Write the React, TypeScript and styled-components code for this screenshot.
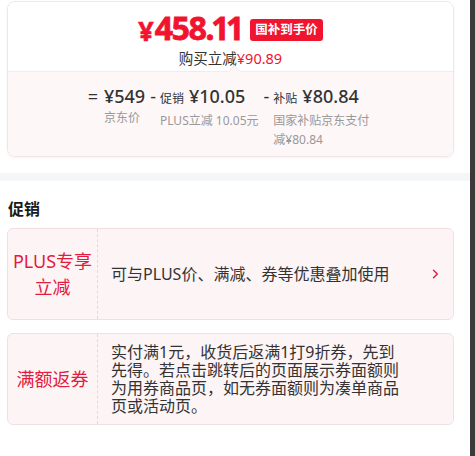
import React from "react";
import styled, { createGlobalStyle } from "styled-components";

const Global = createGlobalStyle`
  html, body { margin: 0; padding: 0; background: #fff; }
  body {
    font-family: "Noto Sans", "Noto Sans CJK SC", sans-serif;
    color: #333;
    -webkit-font-smoothing: antialiased;
  }
  * { box-sizing: border-box; }
`;

const RED = "#f0142f";
const LABEL_RED = "#e31b3d";

const Page = styled.div`
  display: flex;
  width: 475px;
  height: 456px;
  overflow: hidden;
`;

const Main = styled.div`
  flex: 1;
  display: flex;
  flex-direction: column;
`;

const Rail = styled.div`
  width: 5px;
  background: #3a3a3a;
`;

const Padded = styled.div<{ $top?: number }>`
  padding: ${(p) => p.$top ?? 0}px 16px 0 7px;
`;

const PriceCard = styled.div`
  border: 1px solid #f4e4e7;
  border-radius: 8px;
  overflow: hidden;
  box-shadow: 0 1px 3px rgba(0, 0, 0, 0.05);
`;

const PriceTop = styled.div`
  background: #fff;
  height: 70px;
  display: flex;
  flex-direction: column;
  align-items: center;
  padding-top: 9px;
  position: relative;
  border-bottom: 1px solid #f6eaec;
  &::after {
    content: "";
    position: absolute;
    left: 50%;
    bottom: -1px;
    width: 8px;
    height: 8px;
    margin-left: -1px;
    background: #fdf7f8;
    border-left: 1px solid #f6eaec;
    border-top: 1px solid #f6eaec;
    transform: translateY(4px) rotate(45deg);
  }
`;

const PriceLine = styled.div`
  display: flex;
  align-items: flex-end;
  height: 33px;
`;

const Yen = styled.span`
  font-family: "Noto Sans", sans-serif;
  font-weight: 700;
  font-size: 27px;
  line-height: 27px;
  color: ${RED};
  -webkit-text-stroke: 0.6px ${RED};
  margin-right: 1px;
`;

const BigNum = styled.span`
  font-family: "Noto Sans", sans-serif;
  font-weight: 700;
  font-size: 32px;
  line-height: 32px;
  letter-spacing: -1.8px;
  font-feature-settings: "pnum";
  color: ${RED};
  -webkit-text-stroke: 0.8px ${RED};
`;

const Badge = styled.span`
  margin-left: 8px;
  margin-bottom: 3px;
  background: ${RED};
  color: #fff;
  font-size: 12.5px;
  font-weight: 700;
  line-height: 22px;
  padding: 0 5px;
  border-radius: 3px;
`;

const SaveLine = styled.div`
  margin-top: 5px;
  font-size: 14.5px;
  line-height: 18px;
  color: #333;
`;

const SaveAmt = styled.span`
  color: ${RED};
`;

const PriceBottom = styled.div`
  background: #fdf7f8;
  height: 84px;
  display: flex;
  justify-content: center;
  align-items: flex-start;
  gap: 5px;
  padding-top: 12px;
`;

const Part = styled.div`
  display: flex;
  align-items: flex-start;
`;

const Sign = styled.span<{ $gap: number }>`
  font-size: 18px;
  line-height: 24px;
  color: #333;
  margin-right: ${(p) => p.$gap}px;
`;

const PartBody = styled.div`
  display: flex;
  flex-direction: column;
`;

const Value = styled.div`
  font-size: 18px;
  line-height: 24px;
  font-weight: 500;
  color: #333;
  white-space: nowrap;
`;

const ValueTag = styled.span`
  font-size: 12px;
  font-weight: 400;
  margin-right: 5px;
`;

const Caption = styled.div<{ $max?: number }>`
  font-size: 12px;
  line-height: 19px;
  color: #999;
  max-width: ${(p) => (p.$max ? `${p.$max}px` : "none")};
`;

const Band = styled.div`
  margin-top: 16px;
  height: 8px;
  background: #f5f6f8;
`;

const Heading = styled.div`
  padding: 16px 0 0 8px;
  font-size: 16px;
  font-weight: 700;
  line-height: 24px;
  color: #1a1a1a;
`;

const PromoList = styled.div`
  display: flex;
  flex-direction: column;
  gap: 13px;
`;

const Promo = styled.div`
  display: flex;
  min-height: 92px;
  border: 1px solid #f3dfe3;
  border-radius: 6px;
  background: #fdf4f6;
`;

const PromoLabel = styled.div`
  width: 90px;
  flex-shrink: 0;
  display: flex;
  align-items: center;
  justify-content: center;
  text-align: center;
  border-right: 1px dashed #efd3d9;
  color: ${LABEL_RED};
  font-size: 18px;
  line-height: 26px;
  padding: 0 2px;
`;

const PromoBody = styled.div`
  flex: 1;
  display: flex;
  align-items: center;
  padding: 8px 14px 8px 13px;
`;

const PromoText = styled.div`
  flex: 1;
  max-width: 296px;
  font-size: 16px;
  line-height: 18px;
  color: #333;
`;

const Chevron = styled.svg`
  margin-left: auto;
  flex-shrink: 0;
`;

export default function App() {
  return (
    <>
      <Global />
      <Page>
        <Main>
          <Padded $top={1}>
            <PriceCard>
              <PriceTop>
                <PriceLine>
                  <Yen>¥</Yen>
                  <BigNum>458.11</BigNum>
                  <Badge>国补到手价</Badge>
                </PriceLine>
                <SaveLine>
                  购买立减<SaveAmt>¥90.89</SaveAmt>
                </SaveLine>
              </PriceTop>
              <PriceBottom>
                <Part>
                  <Sign $gap={6}>=</Sign>
                  <PartBody>
                    <Value>¥549</Value>
                    <Caption>京东价</Caption>
                  </PartBody>
                </Part>
                <Part>
                  <Sign $gap={4}>-</Sign>
                  <PartBody>
                    <Value>
                      <ValueTag>促销</ValueTag>¥10.05
                    </Value>
                    <Caption>PLUS立减 10.05元</Caption>
                  </PartBody>
                </Part>
                <Part>
                  <Sign $gap={4}>-</Sign>
                  <PartBody>
                    <Value>
                      <ValueTag>补贴</ValueTag>¥80.84
                    </Value>
                    <Caption $max={100}>国家补贴京东支付减¥80.84</Caption>
                  </PartBody>
                </Part>
              </PriceBottom>
            </PriceCard>
          </Padded>
          <Band />
          <Heading>促销</Heading>
          <Padded $top={7}>
            <PromoList>
              <Promo>
                <PromoLabel>
                  PLUS专享
                  <br />
                  立减
                </PromoLabel>
                <PromoBody>
                  <PromoText>可与PLUS价、满减、券等优惠叠加使用</PromoText>
                  <Chevron width="7" height="10" viewBox="0 0 7 10" fill="none">
                    <path d="M1.5 1.2 L5.3 5 L1.5 8.8" stroke={LABEL_RED} strokeWidth="1.4" strokeLinecap="round" strokeLinejoin="round" />
                  </Chevron>
                </PromoBody>
              </Promo>
              <Promo>
                <PromoLabel>满额返券</PromoLabel>
                <PromoBody>
                  <PromoText>
                    实付满1元，收货后返满1打9折券，先到先得。若点击跳转后的页面展示券面额则为用券商品页，如无券面额则为凑单商品页或活动页。
                  </PromoText>
                </PromoBody>
              </Promo>
            </PromoList>
          </Padded>
        </Main>
        <Rail />
      </Page>
    </>
  );
}
